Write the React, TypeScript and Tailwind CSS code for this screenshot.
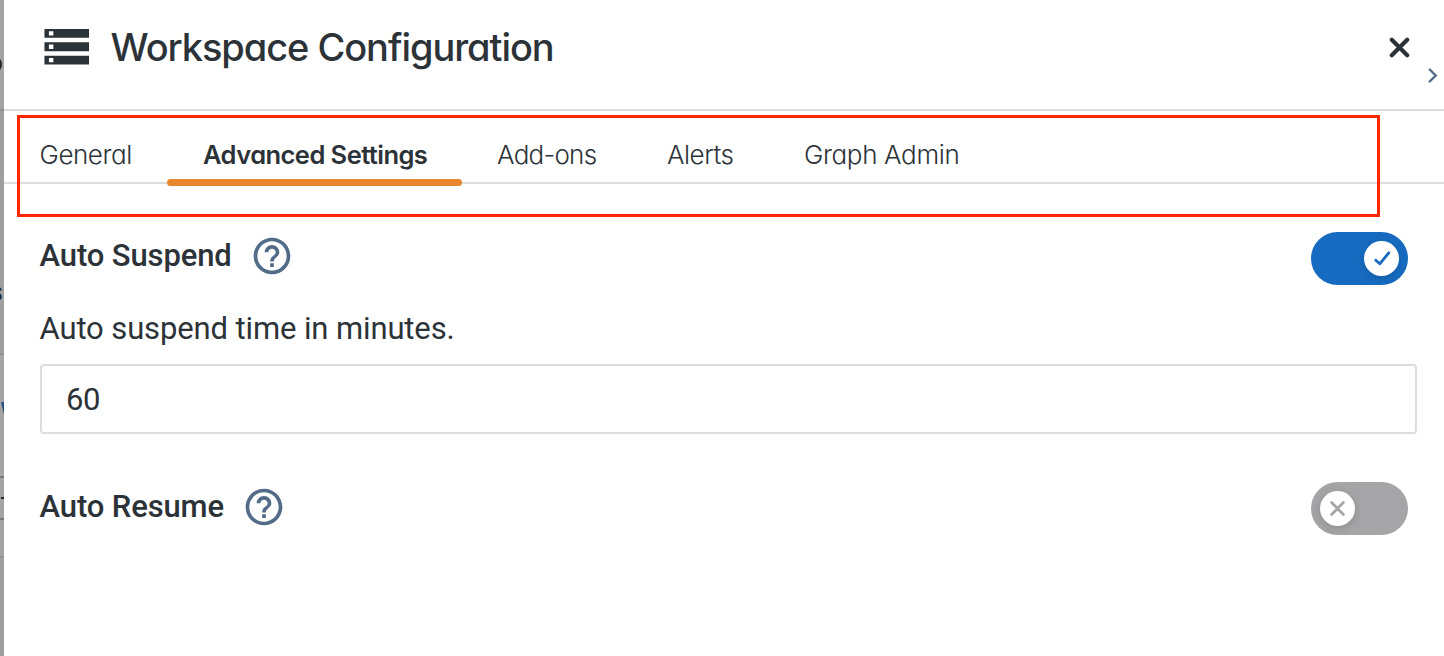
import { useState } from "react";
import { MdHelpOutline, MdStorage } from "react-icons/md";

const tabs = [
  { label: "General", box: "ml-[35.5px] w-[92.5px]", text: "font-light tracking-[-0.45px]" },
  { label: "Advanced Settings", box: "ml-[35px] w-[295px] pl-[36px]", text: "font-semibold tracking-[-0.55px] text-[25.5px]" },
  { label: "Add-ons", box: "ml-[35px] w-[100px]", text: "font-light tracking-[-0.75px]" },
  { label: "Alerts", box: "ml-[70px] w-[67px]", text: "font-light tracking-[-0.5px]" },
  { label: "Graph Admin", box: "ml-[70px] w-[156px]", text: "font-light tracking-[-0.35px]" },
];

function Backdrop() {
  return (
    <div className="relative flex h-full w-[4px] shrink-0 flex-col overflow-hidden bg-[#a19f9e]">
      <div className="h-[109px] bg-[#a5a3a2]" />
      <div className="h-[2px] bg-[#908f8e]" />
      <div className="h-[242px]" />
      <div className="h-[2px] bg-[#939291]" />
      <div className="h-[121px] bg-[#a6a4a3]" />
      <div className="h-[2px] bg-[#757b7f]" />
      <div className="h-[40px] bg-[#a6a4a3]" />
      <div className="h-[2px] bg-[#757b7f]" />
      <div className="h-[36px] bg-[#a6a4a3]" />
      <div className="h-[2px] bg-[#939291]" />
      <div className="absolute top-[57px] right-[2px] h-[15px] w-[12px] rounded-[50%] border-[3px] border-[#22282c]" />
      <span className="absolute top-[276px] right-[1px] font-[Roboto] text-[27px] leading-[32px] text-[#22282c]">s</span>
      <svg className="absolute top-[402px] left-[1px] h-[20px] w-[3px]" viewBox="0 0 3 20" fill="#245089">
        <path d="M0 0H3V13Z" />
      </svg>
      <div className="absolute top-[497px] left-[1px] h-[2px] w-[3px] bg-[#22282c]" />
    </div>
  );
}

function Toggle({ initial }: { initial: boolean }) {
  const [on, setOn] = useState(initial);
  return (
    <button
      role="switch"
      aria-checked={on}
      onClick={() => setOn(!on)}
      className={`flex h-[53px] w-[97px] shrink-0 items-center rounded-full px-[9px] ${on ? "justify-end bg-[#166bc1]" : "justify-start bg-[#a5a5a7]"}`}
    >
      <span className="flex size-[35px] items-center justify-center rounded-full bg-white shadow-[0_2px_8px_rgba(0,0,0,0.15)]">
        {on ? (
          <svg className="size-[35px]" viewBox="0 0 35 35" fill="none" stroke="#166bc1" strokeWidth="2.8" strokeLinecap="round" strokeLinejoin="round">
            <path d="M11.8 19.2L15.8 22.8L24.8 11.8" />
          </svg>
        ) : (
          <svg className="size-[35px]" viewBox="0 0 35 35" fill="none" stroke="#a5a5a7" strokeWidth="2.8" strokeLinecap="round">
            <path d="M11.6 11.6L23.4 23.4M23.4 11.6L11.6 23.4" />
          </svg>
        )}
      </span>
    </button>
  );
}

export default function App() {
  return (
    <div className="flex h-[656px] w-[1444px] overflow-hidden bg-white text-[#2c3338]">
      <Backdrop />
      <main className="relative flex min-w-0 flex-1 flex-col font-[Roboto,sans-serif]">
        <header className="flex h-[111px] items-start border-b-2 border-[#dddddd] pl-[36px]">
          <MdStorage className="mt-[20px] size-[53.5px] shrink-0" />
          <h1 className="mt-[22px] ml-[17px] font-[Inter,sans-serif] text-[38px] leading-[50px] font-medium tracking-[-1.06px] whitespace-nowrap [font-feature-settings:'cv11']">
            Workspace Configuration
          </h1>
          <button aria-label="Close" className="mt-[37px] ml-auto size-[21px]">
            <svg className="size-[21px]" viewBox="0 0 21 21" fill="none" stroke="currentColor" strokeWidth="4.2" strokeLinecap="round">
              <path d="M2.8 2.8L18.2 18.2M18.2 2.8L2.8 18.2" />
            </svg>
          </button>
          <svg className="mt-[67px] mr-[6px] ml-[18px] h-[17px] w-[10px]" viewBox="0 0 10 17" fill="none" stroke="#526b88" strokeWidth="2.4" strokeLinecap="round">
            <path d="M1.7 2.5L7.7 8.5L1.7 14.5" />
          </svg>
        </header>

        <nav className="flex h-[73px] border-b-2 border-[#dddddd] text-[26px]">
          {tabs.map((tab, i) => (
            <button
              key={tab.label}
              className={`relative flex h-[75px] shrink-0 items-start pt-[28px] font-[Inter,sans-serif] leading-[32px] whitespace-nowrap [font-feature-settings:'cv11'] ${tab.box} ${tab.text}`}
            >
              {tab.label}
              {i === 1 && <span className="absolute top-[68px] left-0 h-[7px] w-full rounded-full bg-[#e8862d]" />}
            </button>
          ))}
        </nav>

        <section className="flex flex-col pr-[27px] pl-[36px]">
          <div className="mt-[48px] flex h-[53px] items-start pr-[9px]">
            <h2 className="mt-[5px] -ml-[0.5px] w-[210.5px] text-[31px] leading-[38px] font-medium tracking-[-0.12px] whitespace-nowrap">Auto Suspend</h2>
            <MdHelpOutline className="mt-[2px] size-[44px] text-[#526b88]" />
            <div className="ml-auto">
              <Toggle initial={true} />
            </div>
          </div>
          <label htmlFor="minutes" className="mt-[25px] -ml-[0.5px] h-[38px] text-[31px] leading-[38px] tracking-[-0.12px] whitespace-nowrap">
            Auto suspend time in minutes.
          </label>
          <input
            id="minutes"
            defaultValue="60"
            className="mt-[16px] h-[70px] w-full rounded-[4px] border-2 border-[#dddddd] px-[24px] text-[31px] tracking-[-0.3px] outline-none"
          />
          <div className="mt-[48px] flex h-[53px] items-start pr-[9px]">
            <h2 className="mt-[6px] -ml-[0.5px] w-[202.5px] text-[31px] leading-[38px] font-medium tracking-[-0.12px] whitespace-nowrap">Auto Resume</h2>
            <MdHelpOutline className="mt-[3px] size-[44px] text-[#526b88]" />
            <div className="ml-auto">
              <Toggle initial={false} />
            </div>
          </div>
        </section>
        <div className="pointer-events-none absolute top-[115px] left-[13px] h-[102px] w-[1363px] border-[3px] border-[#ff2600]" />
      </main>
    </div>
  );
}
